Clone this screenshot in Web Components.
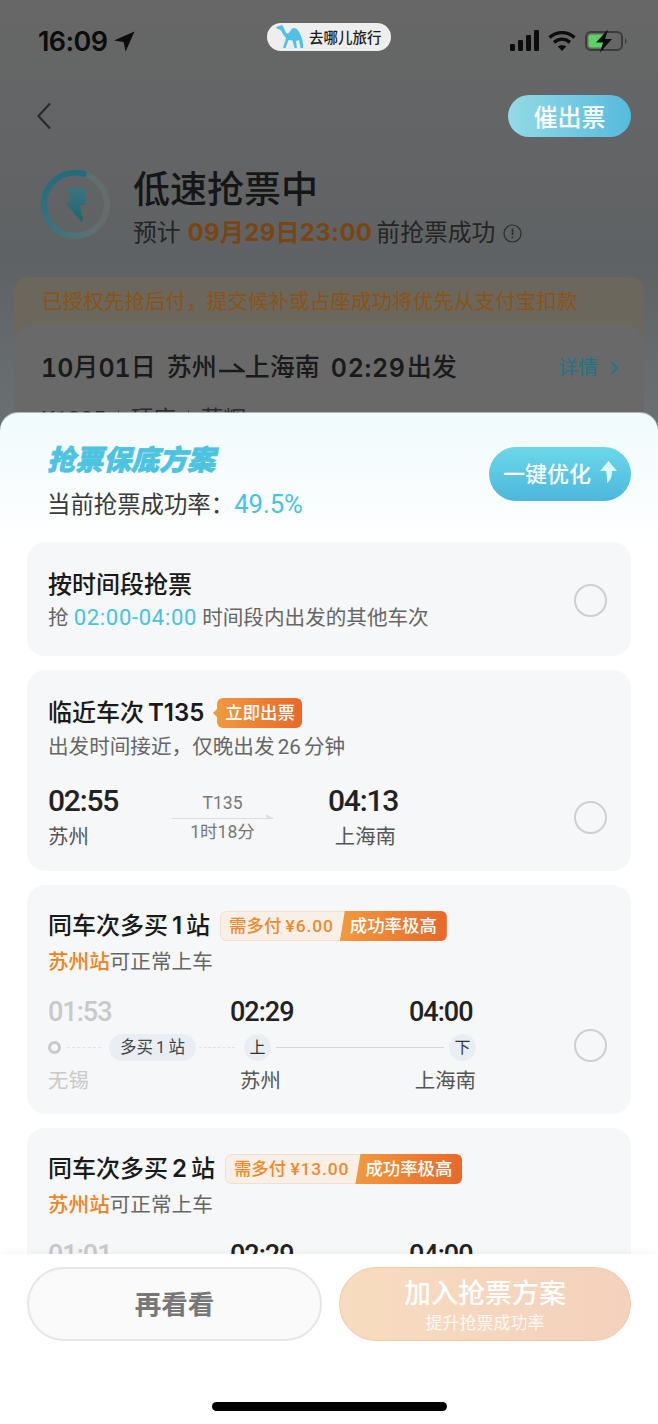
<!DOCTYPE html>
<html lang="zh">
<head>
<meta charset="utf-8">
<title>抢票保底方案</title>
<style>
  html, body { margin: 0; padding: 0; }
  body { font-family: Roboto, "Noto Sans CJK SC", sans-serif; }
</style>
</head>
<body>
<app-screen>
  <order-backdrop></order-backdrop>
  <plan-sheet>
    <plan-card>
      <div slot="body" style="display:flex;align-items:center;justify-content:space-between;padding-bottom:4px">
        <div>
          <card-head title="按时间段抢票"></card-head>
          <card-sub>抢 <span style="color:#45c3df;font-size:22px;letter-spacing:.7px">02:00-04:00</span> 时间段内出发的其他车次</card-sub>
        </div>
        <plan-radio></plan-radio>
      </div>
    </plan-card>
    <plan-card>
      <card-head slot="body" title="临近车次 <b>T135</b>"><flag-tag>立即出票</flag-tag></card-head>
      <card-sub slot="body" style="word-spacing:-2px">出发时间接近，仅晚出发 26 分钟</card-sub>
      <route-direct slot="body" train="T135" duration="1时18分" dep="02:55" from="苏州" arr="04:13" to="上海南"></route-direct>
    </plan-card>
    <plan-card>
      <card-head slot="body" style="margin-top:-2px;padding-bottom:2px" title="同车次多买 <b>1</b> 站"><price-tag price="¥6.00"></price-tag></card-head>
      <card-sub slot="body"><span style="color:#ee8420;font-weight:500">苏州站</span>可正常上车</card-sub>
      <route-extra slot="body" first="01:53" dep="02:29" arr="04:00" origin="无锡"></route-extra>
    </plan-card>
    <plan-card>
      <card-head slot="body" style="margin-top:-2px;padding-bottom:2px" title="同车次多买 <b>2</b> 站"><price-tag price="¥13.00"></price-tag></card-head>
      <card-sub slot="body"><span style="color:#ee8420;font-weight:500">苏州站</span>可正常上车</card-sub>
      <route-extra slot="body" first="01:01" dep="02:29" arr="04:00" partial></route-extra>
    </plan-card>
  </plan-sheet>
</app-screen>

<script>
class AppScreen extends HTMLElement {
    constructor() {
        super();
        this.attachShadow({ mode: "open" });
    }

    connectedCallback() {
        this.shadowRoot.innerHTML = `
            <style>
                :host {
                    display: block;
                    position: relative;
                    width: 658px;
                    height: 1424px;
                    overflow: hidden;
                    background: linear-gradient(#676767 0, #5f6264 260px, #6a7072 420px);
                }
            </style>
            <slot></slot>
        `;
    }
}

class OrderBackdrop extends HTMLElement {
    constructor() {
        super();
        this.attachShadow({ mode: "open" });
    }

    connectedCallback() {
        this.shadowRoot.innerHTML = `
            <style>
                :host { display: block; color: #141414; }
                .status {
                    height: 82px;
                    display: flex;
                    align-items: center;
                    justify-content: space-between;
                    padding: 0 30px 0 38px;
                    position: relative;
                }
                .clock {
                    display: flex;
                    align-items: center;
                    gap: 7px;
                    font: 600 27px/1 Inter, Roboto, sans-serif;
                    letter-spacing: -0.6px;
                    color: #0c0c0c;
                }
                .icons { display: flex; align-items: center; gap: 9px; }
                .app-pill {
                    position: absolute;
                    left: 267px;
                    top: 23px;
                    width: 124px;
                    height: 28px;
                    box-sizing: border-box;
                    padding-left: 9px;
                    border-radius: 14px;
                    background: #eeeeee;
                    display: flex;
                    align-items: center;
                    gap: 5px;
                    font: 500 14.5px/1 "Noto Sans CJK SC", sans-serif;
                    color: #1a1a1a;
                    white-space: nowrap;
                }
                .nav {
                    height: 42px;
                    margin-top: 13px;
                    padding: 0 27px 0 36px;
                    display: flex;
                    align-items: center;
                    justify-content: space-between;
                }
                .urge {
                    width: 123px;
                    height: 42px;
                    border-radius: 21px;
                    background: linear-gradient(90deg, #93dae6, #56bbdc);
                    color: #fff;
                    font: 500 24px/42px "Noto Sans CJK SC", sans-serif;
                    text-align: center;
                }
                .hero {
                    display: flex;
                    gap: 20px;
                    padding: 28px 0 0 38px;
                    height: 109px;
                }
                h1 {
                    margin: 0;
                    font: 500 37px/44px "Noto Sans CJK SC", sans-serif;
                    color: #161616;
                }
                .eta {
                    margin-top: 8px;
                    display: flex;
                    align-items: center;
                    font-size: 23.8px;
                    line-height: 32px;
                    color: #252525;
                    white-space: nowrap;
                }
                .eta b {
                    font: 700 24px/32px Inter, "Noto Sans CJK SC", sans-serif;
                    color: #7a4512;
                    margin: 0 4px 0 7px;
                    letter-spacing: .3px;
                }
                .eta svg { margin-left: 8px; }
                .notice {
                    margin: 3px 14px 0 14px;
                    height: 80px;
                    box-sizing: border-box;
                    padding: 10px 28px;
                    border-radius: 14px 14px 0 0;
                    background: #6c675c;
                    color: #8a5316;
                    font-size: 20.6px;
                    line-height: 30px;
                    white-space: nowrap;
                }
                .order {
                    margin: -32px 14px 0 14px;
                    height: 150px;
                    position: relative;
                    box-sizing: border-box;
                    padding: 27px 26px 0 27px;
                    border-radius: 18px 18px 0 0;
                    background: #696969;
                }
                .line {
                    display: flex;
                    justify-content: space-between;
                    align-items: center;
                    font: 500 25px/32px Roboto, "Noto Sans CJK SC", sans-serif;
                    color: #1a1a1a;
                    white-space: nowrap;
                }
                .line b {
                    font: 600 25px/32px Inter, sans-serif;
                    font-variant-numeric: tabular-nums;
                }
                .trip { display: flex; align-items: center; gap: 11px; }
                .trip > span { display: flex; align-items: center; }
                .trip .at { letter-spacing: .7px; margin-right: 1px; }
                .more {
                    display: flex;
                    align-items: center;
                    gap: 12px;
                    font: 400 20px/32px Roboto, "Noto Sans CJK SC", sans-serif;
                    color: #1f7588;
                }
                .train {
                    margin-top: 21px;
                    display: flex;
                    align-items: center;
                    gap: 12px;
                    font-size: 22.5px;
                    line-height: 28px;
                    color: #2a2a2a;
                    white-space: nowrap;
                }
                .train i { width: 1px; height: 18px; background: #444; }
            </style>
            <div class="status">
                <span class="clock">16:09
                    <svg width="21" height="21" viewBox="0 0 21 21"><path d="M20.5 .5 L0 9.6 L9.6 11 L11.6 20.5 Z" fill="#0c0c0c"/></svg>
                </span>
                <div class="app-pill">
                    <svg width="28" height="24" viewBox="0 0 28 24"><path d="M0 2 L6 0 L8 3 C9 6 10 9 12 8.5 C14 8 15 3 18 3 C21 3 23 6 25 11 C27 15 27 19 27 23 L24.5 23 L23 15 L20 16 L21 23 L18.5 23 L16.5 15.5 L12.5 15 L9.5 23 L7 23 L10 13 C8 11 6 7 4 4.5 L1.5 4 Z" fill="#4fc0e6"/></svg>
                    去哪儿旅行
                </div>
                <div class="icons">
                    <svg width="29" height="22" viewBox="0 0 29 22" fill="#0c0c0c">
                        <rect x="0" y="14" width="5" height="7" rx="1.2"/><rect x="8" y="10" width="5" height="11" rx="1.2"/>
                        <rect x="16" y="5" width="5" height="16" rx="1.2"/><rect x="24" y="0" width="5" height="21" rx="1.2"/>
                    </svg>
                    <svg width="28" height="22" viewBox="0 0 28 22" fill="none" stroke="#0c0c0c" stroke-width="3.4" stroke-linecap="butt">
                        <path d="M1.5 7.5 C9 1 19 1 26.5 7.5"/><path d="M6 12.3 C11 8.3 17 8.3 22 12.3"/><path d="M14 21 L9.8 16.6 C12.2 14.7 15.8 14.7 18.2 16.6 Z" fill="#0c0c0c" stroke="none"/>
                    </svg>
                    <svg width="43" height="24" viewBox="0 0 43 24">
                        <rect x="1" y="3" width="36" height="18" rx="5" fill="none" stroke="#3b3b3b" stroke-width="2"/>
                        <rect x="3.5" y="5.5" width="16" height="13" rx="2.5" fill="#5fd061"/>
                        <path d="M40 9 C42 10 42 14 40 15 Z" fill="#3b3b3b"/>
                        <path d="M23 .5 L11 13.5 L18 13.5 L15 23.5 L27 10 L20 10 Z" fill="#0c0c0c"/>
                    </svg>
                </div>
            </div>
            <div class="nav">
                <svg width="16" height="28" viewBox="0 0 16 28" fill="none" stroke="#2a2a2a" stroke-width="2.2"><path d="M14 1.5 L2.5 14 L14 26.5"/></svg>
                <div class="urge">催出票</div>
            </div>
            <div class="hero">
                <svg width="75" height="75" viewBox="0 0 75 75" style="flex:none;margin-top:2px">
                    <defs>
                        <linearGradient id="ring" x1="0" y1="0" x2="1" y2="0">
                            <stop offset="0" stop-color="#337280"/><stop offset=".5" stop-color="#4f7478"/><stop offset="1" stop-color="#686b6b"/>
                        </linearGradient>
                        <linearGradient id="arc" x1="0" y1="0" x2="0" y2="1">
                            <stop offset="0" stop-color="#236b7b"/><stop offset="1" stop-color="#236b7b" stop-opacity="0"/>
                        </linearGradient>
                        <linearGradient id="bolt" x1="0" y1="0" x2="0" y2="1">
                            <stop offset="0" stop-color="#3d7380"/><stop offset="1" stop-color="#1d6675"/>
                        </linearGradient>
                    </defs>
                    <circle cx="37.5" cy="37.3" r="31.5" fill="none" stroke="url(#ring)" stroke-width="6"/>
                    <path d="M45.8 6.9 A31.5 31.5 0 0 0 9 51" fill="none" stroke="url(#arc)" stroke-width="6" stroke-linecap="round"/>
                    <path d="M29.2 20.7 H47.5 V38 H41.8 L44.8 52.5 C45 54.5 43.5 54.8 42.5 53.8 L27.5 35.7 L33.2 34.7 Z" fill="url(#bolt)"/>
                </svg>
                <div>
                    <h1>低速抢票中</h1>
                    <div class="eta">预计<b>09月29日23:00</b>前抢票成功
                        <svg width="19" height="19" viewBox="0 0 19 19" fill="none" stroke="#2c2c2c" stroke-width="1.2">
                            <circle cx="9.5" cy="9.5" r="8.5"/><path d="M9.5 4.5 V11 M9.5 12.6 V14.2" stroke-width="1.6"/>
                        </svg>
                    </div>
                </div>
            </div>
            <div class="notice">已授权先抢后付，提交候补或占座成功将优先从支付宝扣款</div>
            <div class="order">
                <div class="line">
                    <div class="trip">
                        <span><b>10</b>月<b>01</b>日</span>
                        <span>苏州<svg width="28" height="14" viewBox="0 0 28 14" fill="none" stroke="#1a1a1a" stroke-width="2.4"><path d="M2 10 H26 L17 3"/></svg>上海南</span>
                        <span><b class="at">02:29</b>出发</span>
                    </div>
                    <span class="more">详情
                        <svg width="8" height="14" viewBox="0 0 8 14" fill="none" stroke="#1f7588" stroke-width="1.6"><path d="M1 1 L7 7 L1 13"/></svg>
                    </span>
                </div>
                <div class="train"><span>K1305</span><i></i><span>硬座</span><i></i><span>蒋辉</span></div>
            </div>
        `;
    }
}

class PlanSheet extends HTMLElement {
    constructor() {
        super();
        this.attachShadow({ mode: "open" });
    }

    connectedCallback() {
        this.shadowRoot.innerHTML = `
            <style>
                :host {
                    display: flex;
                    flex-direction: column;
                    position: absolute;
                    left: 0;
                    right: 0;
                    top: 413px;
                    bottom: 0;
                    border-radius: 18px 18px 0 0;
                    overflow: hidden;
                    background: linear-gradient(#f0fafc 0, #ffffff 128px);
                    box-shadow: 0 -1px 0 rgba(255,255,255,.5);
                }
                .head {
                    height: 128.5px;
                    flex: none;
                    box-sizing: border-box;
                    padding: 31px 27px 0 47px;
                    display: flex;
                    justify-content: space-between;
                    align-items: flex-start;
                }
                .name {
                    font: italic 900 28px/28px "Noto Sans CJK SC", sans-serif;
                    -webkit-text-stroke: .7px #4cc3e0;
                    color: #4cc3e0;
                    white-space: nowrap;
                }
                .rate {
                    margin-top: 17px;
                    font-size: 23.4px;
                    line-height: 30px;
                    color: #3a3a3a;
                    white-space: nowrap;
                }
                .rate span { color: #45c3df; font-size: 25.6px; }
                .tune {
                    width: 142px;
                    height: 54px;
                    margin-top: 3px;
                    box-sizing: border-box;
                    padding: 0 0 4px 14px;
                    border-radius: 27px;
                    background: linear-gradient(#6cd8ea, #4cb6dc);
                    color: #fff;
                    display: flex;
                    align-items: center;
                    gap: 8px;
                    font-size: 22px;
                    font-weight: 500;
                    white-space: nowrap;
                }
                .list {
                    flex: 1;
                    min-height: 0;
                    overflow: hidden;
                    padding: 0 27px;
                    display: flex;
                    flex-direction: column;
                    gap: 14px;
                }
                ::slotted(plan-card) { flex: none; }
                .foot {
                    flex: none;
                    height: 170px;
                    box-sizing: border-box;
                    padding: 13px 27px 0;
                    background: #fff;
                    box-shadow: 0 -3px 8px rgba(0,0,0,.03);
                    position: relative;
                }
                .btns { display: flex; gap: 17px; height: 74px; }
                .later {
                    width: 295px;
                    box-sizing: border-box;
                    border: 2px solid #e6e6e6;
                    border-radius: 37px;
                    background: #fafafa;
                    color: #777;
                    font-size: 26.5px;
                    font-weight: 700;
                    line-height: 72px;
                    text-align: center;
                }
                .join {
                    flex: 1;
                    box-sizing: border-box;
                    border: 1px solid #f1c9a8;
                    border-radius: 37px;
                    background: linear-gradient(90deg, #f7dcbf, #f4d1bc);
                    color: #fff;
                    text-align: center;
                    font-size: 27px;
                    font-weight: 500;
                    line-height: 34px;
                    padding-top: 9px;
                }
                .join small {
                    display: block;
                    margin-top: 1px;
                    font-size: 17px;
                    font-weight: 400;
                    line-height: 22px;
                    opacity: .85;
                }
                .home {
                    width: 235px;
                    height: 9px;
                    margin: 61px auto 0;
                    border-radius: 5px;
                    background: #000;
                }
            </style>
            <div class="head">
                <div>
                    <div class="name">抢票保底方案</div>
                    <div class="rate">当前抢票成功率：<span>49.5%</span></div>
                </div>
                <div class="tune">一键优化
                    <svg width="18" height="24" viewBox="0 0 18 24"><path d="M9.5 1 L18 11 L13 11 C13 16 12 20 8 23 C8 18 8 15 7 11 L1 11 Z" fill="#dff6fa"/></svg>
                </div>
            </div>
            <div class="list"><slot></slot></div>
            <div class="foot">
                <div class="btns">
                    <div class="later">再看看</div>
                    <div class="join">加入抢票方案<small>提升抢票成功率</small></div>
                </div>
                <div class="home"></div>
            </div>
        `;
    }
}

class PlanCard extends HTMLElement {
    constructor() {
        super();
        this.attachShadow({ mode: "open" });
    }

    connectedCallback() {
        this.shadowRoot.innerHTML = `
            <style>
                :host {
                    display: block;
                    box-sizing: border-box;
                    padding: 28px 24px 20px 21px;
                    border-radius: 18px;
                    background: #f6f7f9;
                }
            </style>
            <slot name="body"></slot>
        `;
    }
}

class CardHead extends HTMLElement {
    constructor() {
        super();
        this.attachShadow({ mode: "open" });
    }

    connectedCallback() {
        this.shadowRoot.innerHTML = `
            <style>
                :host {
                    display: flex;
                    align-items: center;
                    gap: 8px;
                    height: 30px;
                    font-size: 24px;
                    font-weight: 500;
                    line-height: 30px;
                    color: #1a1a1a;
                    white-space: nowrap;
                    word-spacing: -2px;
                }
                b { font: 600 24px/30px Inter, Roboto, sans-serif; }
            </style>
            <span>${this.getAttribute("title")}</span>
            <slot></slot>
        `;
    }
}

class CardSub extends HTMLElement {
    constructor() {
        super();
        this.attachShadow({ mode: "open" });
    }

    connectedCallback() {
        this.shadowRoot.innerHTML = `
            <style>
                :host {
                    display: block;
                    margin-top: 4.5px;
                    font-size: 20.6px;
                    line-height: 28px;
                    color: #666;
                    white-space: nowrap;
                }
            </style>
            <slot></slot>
        `;
    }
}

class FlagTag extends HTMLElement {
    constructor() {
        super();
        this.attachShadow({ mode: "open" });
    }

    connectedCallback() {
        this.shadowRoot.innerHTML = `
            <style>
                :host {
                    display: block;
                    position: relative;
                    height: 30px;
                    margin-left: 5px;
                    padding: 0 7px 0 8px;
                    border-radius: 6px;
                    background: linear-gradient(90deg, #f09a3e, #e8682a);
                    color: #fff;
                    font-size: 17.4px;
                    line-height: 30px;
                    font-weight: 500;
                }
                :host::before {
                    content: "";
                    position: absolute;
                    left: -4px;
                    top: 11px;
                    border-top: 4px solid transparent;
                    border-bottom: 4px solid transparent;
                    border-right: 4px solid #f09a3e;
                }
            </style>
            <slot></slot>
        `;
    }
}

class PriceTag extends HTMLElement {
    constructor() {
        super();
        this.attachShadow({ mode: "open" });
    }

    connectedCallback() {
        this.shadowRoot.innerHTML = `
            <style>
                :host {
                    display: flex;
                    height: 30px;
                    margin-left: 2px;
                    box-sizing: border-box;
                    border-radius: 6px;
                    overflow: hidden;
                    font-size: 17.4px;
                    font-weight: 500;
                    line-height: 30px;
                    word-spacing: 0;
                }
                .pay {
                    padding: 0 11px 0 8px;
                    margin-right: -5px;
                    box-sizing: border-box;
                    border: 1px solid #f3e0cc;
                    border-right: 0;
                    border-radius: 6px 0 0 6px;
                    background: #f8efe6;
                    color: #ee8a2d;
                    line-height: 28px;
                }
                .pay span { letter-spacing: .9px; }
                .rate {
                    padding: 0 10px 0 10px;
                    background: linear-gradient(90deg, #f09a3e, #e8682a);
                    color: #fff;
                    clip-path: polygon(5px 0, 100% 0, 100% 100%, 0 100%);
                }
            </style>
            <span class="pay">需多付 <span>${this.getAttribute("price")}</span></span>
            <span class="rate">成功率极高</span>
        `;
    }
}

class PlanRadio extends HTMLElement {
    constructor() {
        super();
        this.attachShadow({ mode: "open" });
    }

    connectedCallback() {
        this.shadowRoot.innerHTML = `
            <style>
                :host {
                    display: block;
                    flex: none;
                    width: 33px;
                    height: 33px;
                    box-sizing: border-box;
                    border: 2px solid #cfcfcf;
                    border-radius: 50%;
                }
            </style>
        `;
    }
}

class RouteDirect extends HTMLElement {
    constructor() {
        super();
        this.attachShadow({ mode: "open" });
    }

    connectedCallback() {
        const attr = name => this.getAttribute(name);
        this.shadowRoot.innerHTML = `
            <style>
                :host {
                    display: flex;
                    align-items: center;
                    justify-content: space-between;
                    margin-top: 23.5px;
                }
                .row { display: grid; grid-template-columns: 124px 101px 55px 68px; }
                .time {
                    font-size: 30px;
                    font-weight: 500;
                    line-height: 34px;
                    letter-spacing: -1.2px;
                    color: #222;
                }
                .city {
                    font-size: 20.4px;
                    line-height: 28px;
                    margin-top: 5px;
                    color: #555;
                }
                .end { grid-column: 4; white-space: nowrap; }
                .end .city { text-align: right; }
                .mid {
                    grid-column: 2;
                    display: flex;
                    flex-direction: column;
                    align-items: center;
                    font-size: 17.5px;
                    color: #777;
                    padding-top: 9px;
                }
                .mid span { line-height: 20px; }
                .mid svg { margin: 1px 0 2px; display: block; }
            </style>
            <div class="row">
                <div>
                    <div class="time">${attr("dep")}</div>
                    <div class="city">${attr("from")}</div>
                </div>
                <div class="mid">
                    <span>${attr("train")}</span>
                    <svg width="101" height="6" viewBox="0 0 101 6"><path d="M0 4.5 H101 L94 1 L97 4.5" fill="none" stroke="#dcdcdc" stroke-width="1.2"/></svg>
                    <span>${attr("duration")}</span>
                </div>
                <div class="end">
                    <div class="time">${attr("arr")}</div>
                    <div class="city">${attr("to")}</div>
                </div>
            </div>
            <plan-radio></plan-radio>
        `;
    }
}

class RouteExtra extends HTMLElement {
    constructor() {
        super();
        this.attachShadow({ mode: "open" });
    }

    connectedCallback() {
        const attr = name => this.getAttribute(name);
        const partial = this.hasAttribute("partial");
        // la última tarjeta queda cortada por el pie: solo se ven las horas
        const rest = partial ? "" : `
                <div class="track">
                    <span class="dot"></span>
                    <span class="dash" style="width:34px"></span>
                    <span class="pill">多买 1 站</span>
                    <span class="dash" style="width:36px"></span>
                    <span class="stop" style="margin-left:9px">上</span>
                    <span class="solid"></span>
                    <span class="stop">下</span>
                </div>
                <div class="col3">
                    <div class="city off">${attr("origin")}</div>
                    <div class="city mid">苏州</div>
                    <div class="city last">上海南</div>
                </div>`;
        this.shadowRoot.innerHTML = `
            <style>
                :host {
                    display: flex;
                    align-items: center;
                    justify-content: space-between;
                    margin-top: 20px;
                    margin-bottom: -.5px;
                }
                .col3 { display: grid; grid-template-columns: 182px 179px 67px; }
                .time {
                    font-size: 27px;
                    font-weight: 500;
                    line-height: 32px;
                    letter-spacing: -1px;
                    color: #222;
                }
                .time.off { color: #c9c9c9; }
                .last { text-align: right; }
                .time.last { text-align: left; }
                .track {
                    display: flex;
                    align-items: center;
                    width: 428px;
                    height: 27px;
                    margin: 6px 0;
                }
                .dot {
                    width: 13px;
                    height: 13px;
                    box-sizing: border-box;
                    border: 3px solid #c9c9c9;
                    border-radius: 50%;
                    margin-right: 6px;
                    flex: none;
                }
                .dash { border-top: 1px dashed #e2e2e2; flex: none; }
                .pill {
                    flex: none;
                    width: 87px;
                    height: 27px;
                    border-radius: 14px;
                    background: #e9eef5;
                    color: #444;
                    font-size: 16.5px;
                    line-height: 27px;
                    text-align: center;
                    margin: 0 3px 0 8px;
                    word-spacing: -1px;
                }
                .stop {
                    flex: none;
                    width: 27px;
                    height: 27px;
                    border-radius: 50%;
                    background: #e9eef5;
                    color: #333;
                    font-size: 16px;
                    line-height: 27px;
                    text-align: center;
                }
                .solid { flex: 1; height: 1px; background: #d5d7da; margin: 0 5px; }
                .city { font-size: 20.4px; line-height: 28px; color: #555; }
                .city.off { color: #c9c9c9; }
                .city.mid { padding-left: 10px; }
            </style>
            <div>
                <div class="col3">
                    <div class="time off">${attr("first")}</div>
                    <div class="time">${attr("dep")}</div>
                    <div class="time last">${attr("arr")}</div>
                </div>${rest}
            </div>
            ${partial ? "" : "<plan-radio></plan-radio>"}
        `;
    }
}

customElements.define("app-screen", AppScreen);
customElements.define("order-backdrop", OrderBackdrop);
customElements.define("plan-sheet", PlanSheet);
customElements.define("plan-card", PlanCard);
customElements.define("card-head", CardHead);
customElements.define("card-sub", CardSub);
customElements.define("flag-tag", FlagTag);
customElements.define("price-tag", PriceTag);
customElements.define("plan-radio", PlanRadio);
customElements.define("route-direct", RouteDirect);
customElements.define("route-extra", RouteExtra);
</script>
</body>
</html>
